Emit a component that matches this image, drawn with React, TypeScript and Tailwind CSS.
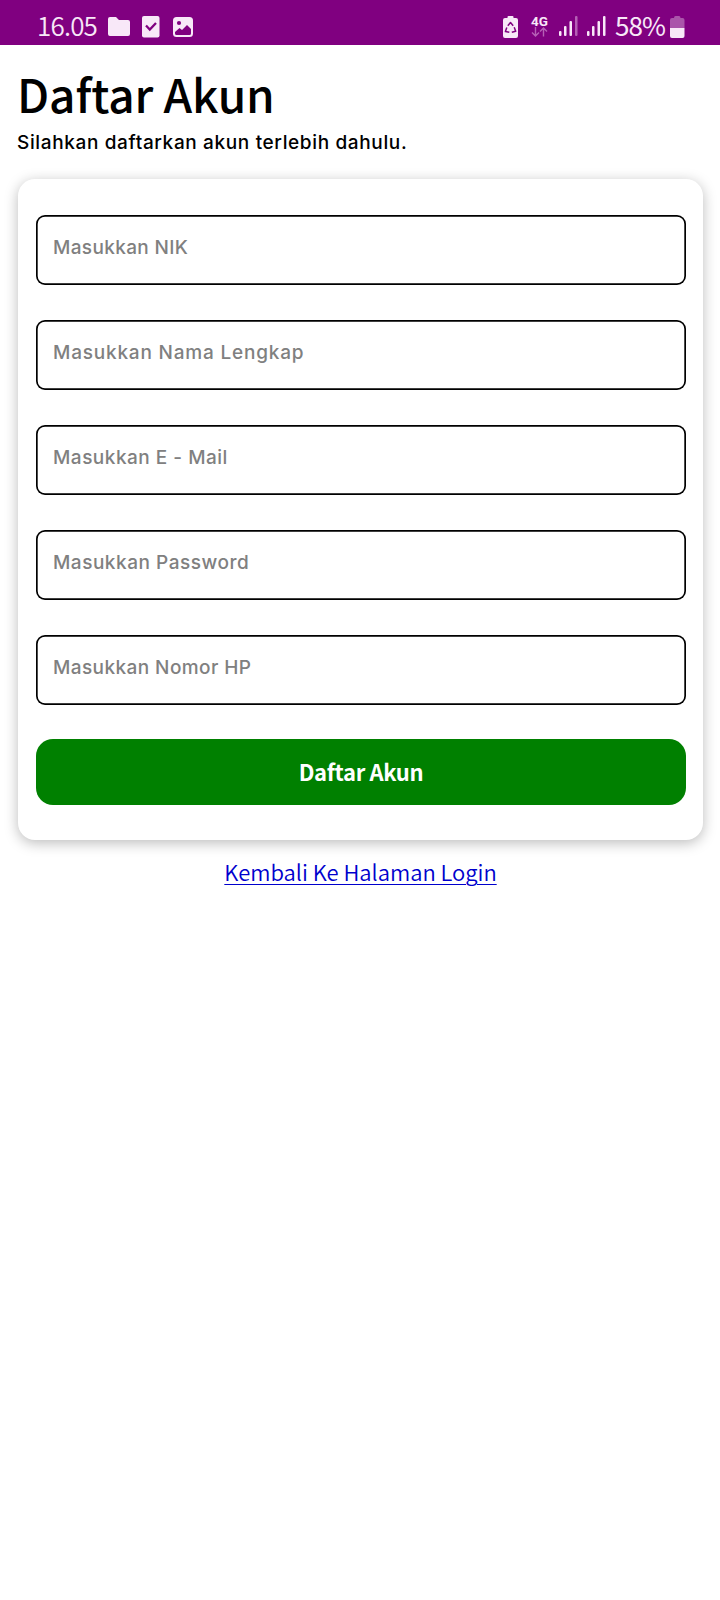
import React from "react";

const fields = [
  { label: "Masukkan NIK", cls: "tracking-[0.35px]" },
  { label: "Masukkan Nama Lengkap", cls: "tracking-[0.8px]" },
  { label: "Masukkan E - Mail", cls: "tracking-[0.5px]" },
  { label: "Masukkan Password", cls: "tracking-[0.52px]" },
  { label: "Masukkan Nomor HP", cls: "tracking-[0.42px]" },
];

function StatusBar() {
  return (
    <header className="flex h-[45px] items-center justify-between bg-[#800080] pr-[35px] pl-[37px] pt-[7px] font-['Noto_Sans_CJK_SC','Noto_Sans',sans-serif] text-[26px] leading-[38px] text-[#f8e8f8]">
      <div className="flex items-center">
        <span className="relative -top-px w-[71px] whitespace-nowrap font-[350] tracking-[-0.8px]">16.05</span>
        <svg className="h-[19px] w-[22px]" viewBox="0 0 22 19" fill="currentColor">
          <path d="M2 0H8L11 3H20Q22 3 22 5V17Q22 19 20 19H2Q0 19 0 17V2Q0 0 2 0Z" />
        </svg>
        <svg className="ml-3 mt-px h-[22px] w-[18px]" viewBox="0 0 18 22">
          <rect width="17.5" height="21.5" rx="2" fill="currentColor" />
          <path d="M4 9.5L7.8 13.5L14 7" fill="none" stroke="#800080" strokeWidth="2.3" />
        </svg>
        <svg className="ml-[13px] mt-px h-5 w-5" viewBox="0 0 20 20">
          <rect width="20" height="20" rx="3.5" fill="currentColor" />
          <circle cx="6" cy="6" r="2.1" fill="#800080" />
          <path d="M2 15L6.5 11L9 13L14 8L18 12V16.5Q18 18 16.5 18H3.5Q2 18 2 16.5Z" fill="#800080" />
        </svg>
      </div>
      <div className="flex items-center">
        <svg className="mt-px h-[22px] w-4" viewBox="0 0 16 22">
          <path d="M4.5 2V1Q4.5 0 5.5 0H9.5Q10.5 0 10.5 1V2H13Q15 2 15 4V20Q15 22 13 22H2Q0 22 0 20V4Q0 2 2 2Z" fill="currentColor" />
          <path d="M4.8 9.8L7.5 6.5L10.2 9.8M11.2 11.2L12.7 15.3L8.8 16.3M6.3 16.3L2.4 15.6L3.8 11.4" fill="none" stroke="#800080" strokeWidth="1.5" strokeLinejoin="round" />
        </svg>
        <div className="ml-3 flex w-[19px] flex-col items-start">
          <span className="h-[12px] font-['Roboto',sans-serif] text-[13.5px] leading-[12px] font-bold">4G</span>
          <svg className="h-[10px] w-[18px]" viewBox="0 0 18 10">
            <path d="M4.5 0V8.5M1 5.5L4.5 9L8 5.5M12.5 9.5V1.500M9 4.500L12.500 1L16 4.500" fill="none" stroke="#b560b5" strokeWidth="1.4" />
          </svg>
        </div>
        <svg className="ml-[9px] h-5 w-[19px]" viewBox="0 0 19 20" fill="currentColor">
          <rect x="0" y="15" width="2.5" height="5" rx="1" /><rect x="5" y="10" width="2.5" height="10" rx="1" /><rect x="10.5" y="5" width="2.5" height="15" rx="1" /><rect x="16" y="0" width="2.5" height="20" rx="1" fill="#b560b5" />
        </svg>
        <svg className="ml-[9px] h-5 w-[19px]" viewBox="0 0 19 20" fill="currentColor">
          <rect x="0" y="15" width="2.5" height="5" rx="1" /><rect x="5" y="10" width="2.5" height="10" rx="1" /><rect x="10.5" y="5" width="2.5" height="15" rx="1" /><rect x="16" y="0" width="2.5" height="20" rx="1" />
        </svg>
        <span className="relative -top-px ml-[9px] w-[55px] whitespace-nowrap tracking-[-0.9px]">58%</span>
        <svg className="mt-px h-[22px] w-[15px]" viewBox="0 0 15 22">
          <path d="M4 2Q4 0 5.5 0H9Q10.5 0 10.5 2H12.5Q14.5 2 14.5 4V12H0V4Q0 2 2 2Z" fill="#aa55aa" />
          <path d="M0 12H14.5V20Q14.5 22 12.5 22H2Q0 22 0 20Z" fill="currentColor" />
        </svg>
      </div>
    </header>
  );
}

export default function App() {
  return (
    <div className="h-[1600px] w-[720px] bg-white">
      <StatusBar />
      <main className="flex flex-col pt-[18px] pr-[17px] pl-[18px]">
        <h1 className="-ml-px h-[60px] whitespace-nowrap font-['Noto_Sans_CJK_SC','Noto_Sans',sans-serif] text-[46px] leading-[60px] font-medium tracking-[-0.1px] text-black">Daftar Akun</h1>
        <p className="-ml-px mt-[6px] h-[28px] whitespace-nowrap font-['Inter',sans-serif] text-[19px] leading-[28px] font-[450] tracking-[0.64px] text-black">Silahkan daftarkan akun terlebih dahulu.</p>
        <form className="mt-[22px] flex h-[661px] flex-col rounded-[17px] bg-white pt-9 pr-[17px] pl-[18px] shadow-[0_3px_14px_rgba(0,0,0,0.27)]" onSubmit={(e) => e.preventDefault()}>
          <div className="flex flex-col gap-[35px]">
            {fields.map((f) => (
              <div key={f.label} className="flex h-[70px] rounded-[9px] pt-[18px] pl-[17px] shadow-[inset_0_0_0_1.7px_#000]">
                <span className={"whitespace-nowrap font-['Inter',sans-serif] text-[19px] leading-[30px] font-medium text-[#808080] " + f.cls}>{f.label}</span>
              </div>
            ))}
          </div>
          <button className="mt-[34px] h-[66px] rounded-[17px] bg-[#008000] pb-[2px] font-['Noto_Sans_CJK_SC','Noto_Sans',sans-serif] text-[22px] font-bold tracking-[-0.35px] text-white">Daftar Akun</button>
        </form>
        <a className="mt-[15px] self-center whitespace-nowrap font-['Noto_Sans_CJK_SC','Noto_Sans',sans-serif] text-[22px] leading-8 font-[350] tracking-[-0.03px] text-[#0000cd] underline decoration-1 underline-offset-[3px]">Kembali Ke Halaman Login</a>
      </main>
    </div>
  );
}
